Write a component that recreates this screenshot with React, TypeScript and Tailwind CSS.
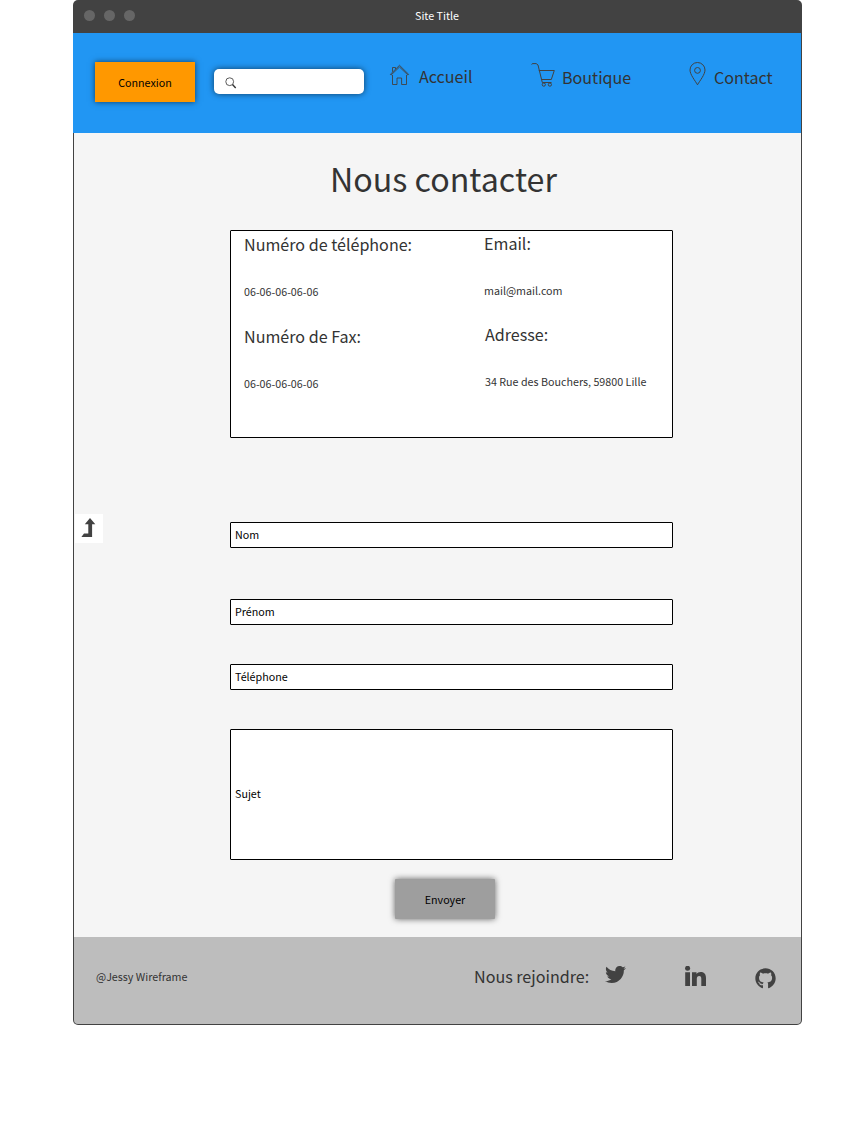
import React from "react";
import { FaTwitter, FaGithub } from "react-icons/fa";

const small = "text-[10.72px] leading-[20px] whitespace-nowrap";
const medium = "text-[16.1px] leading-[24px] whitespace-nowrap text-[#333333]";

function HomeIcon() {
  return (
    <svg className="mt-[31px] h-[22px] w-[21px] shrink-0" viewBox="0 0 21 22" fill="none" stroke="#424242" strokeWidth="0.9">
      <path d="M1.3 10.4 10.5 1.3 19.7 10.4" />
      <path d="M1.3 10.4 2 11.1 10.5 3 19 11.1 19.7 10.4" />
      <path d="M3.5 7.8V3.5h3v1.5" />
      <path d="M3.5 11v9.5h4.5V14h4.6v6.5h4.9V11" />
    </svg>
  );
}

function CartIcon() {
  return (
    <svg className="mt-[29px] h-[26px] w-[25px] shrink-0" viewBox="0 0 25 26" fill="none" stroke="#424242" strokeWidth="1">
      <path d="M0.7 2.6 1.3 1.6H5.2L7 3 11.3 20.5H20.5" />
      <path d="M7.8 8.5H23.3L20.3 17.5H10.5" />
      <circle cx="12.8" cy="22.6" r="1.6" />
      <circle cx="18.9" cy="22.6" r="1.6" />
    </svg>
  );
}

function PinIcon() {
  return (
    <svg className="mt-[28px] h-[25px] w-[17px] shrink-0" viewBox="0 0 17 25" fill="none" stroke="#424242" strokeWidth="1">
      <path d="M8.5 23.8C6 19.5 1 13.5 1 9a7.5 7.5 0 0 1 15 0c0 4.5-5 10.5-7.5 14.8Z" />
      <circle cx="8.5" cy="9.4" r="2.9" />
    </svg>
  );
}

function SearchIcon() {
  return (
    <svg className="h-[12px] w-[12px]" viewBox="0 0 12 12" fill="none" stroke="#333">
      <circle cx="4.7" cy="4.7" r="3.9" strokeWidth="0.8" />
      <path d="M7.5 7.6 10.7 11" strokeWidth="1.4" />
    </svg>
  );
}

function LevelUpIcon() {
  return (
    <svg className="h-[19px] w-[15px]" viewBox="0 0 15 19" fill="#424242">
      <path d="M9 0 14.3 6.2H11.1V19H0.4L3 15.6H7.3V6.2H3.8Z" />
    </svg>
  );
}

function LinkedinIcon() {
  return (
    <svg className="mt-[29px] h-[20px] w-[21px]" viewBox="0 0 21 20" fill="#424242">
      <circle cx="2.6" cy="2.3" r="2.5" />
      <path d="M0.2 6.2H5V20H0.2ZM7 6.2H11.5V8C12.3 6.7 13.7 5.9 15.7 5.9 19.5 5.9 21 8.4 21 12V20H16.3V12.8C16.3 10.9 15.8 9.9 14.2 9.9 12.5 9.9 11.8 11 11.8 12.9V20H7Z" />
    </svg>
  );
}

function Info({ label, value, className }: { label: string; value: string; className: string }) {
  return (
    <div className={className}>
      <h2 className={medium}>{label}</h2>
      <p className={`mt-[26px] text-[#333333] ${small}`}>{value}</p>
    </div>
  );
}

function Field({ label, className }: { label: string; className: string }) {
  return (
    <label className={`flex w-[443px] items-center rounded-[1px] border border-black bg-white pl-1 text-black ${small} ${className}`}>
      {label}
    </label>
  );
}

export default function App() {
  return (
    <div className="h-[1134px] w-[852px] bg-white pl-[73px] font-['Noto_Sans_CJK_SC',sans-serif]">
      <div className="flex h-[1025px] w-[729px] flex-col overflow-hidden rounded-[5px] bg-[#424242]">
        <div className="flex h-[33px] shrink-0 items-start">
          <div className="flex w-[342px] gap-[9px] pt-[9.5px] pl-[11px]">
            <span className="size-[11px] rounded-full bg-[#666666]" />
            <span className="size-[11px] rounded-full bg-[#666666]" />
            <span className="size-[11px] rounded-full bg-[#666666]" />
          </div>
          <span className={`mt-[6px] text-white ${small}`}>Site Title</span>
        </div>

        <header className="mr-px flex h-[100px] shrink-0 items-start bg-[#2196f3]">
          <button className={`mt-[29px] ml-[22px] h-[40px] w-[100px] bg-[#ff9800] pt-[2px] text-black shadow-[0_0_6px_rgba(0,0,0,0.6)] ${small}`}>
            Connexion
          </button>
          <div className="mt-[36px] ml-[19px] flex h-[25px] w-[150px] items-center rounded-[5px] bg-white pt-[2px] pl-[10.5px] shadow-[0_0_6px_rgba(0,0,0,0.6)]">
            <SearchIcon />
          </div>
          <nav className="flex items-start">
            <a className="ml-[25px] flex w-[142px] gap-[9px]">
              <HomeIcon />
              <span className={`mt-[31px] ${medium}`}>Accueil</span>
            </a>
            <a className="flex w-[158px] gap-[6px]">
              <CartIcon />
              <span className={`mt-[32px] ${medium}`}>Boutique</span>
            </a>
            <a className="flex gap-[8px]">
              <PinIcon />
              <span className={`mt-[32px] ${medium}`}>Contact</span>
            </a>
          </nav>
        </header>

        <main className="mx-px flex h-[804px] shrink-0 items-start bg-[#f5f5f5]">
          <a className="mt-[381px] mr-[127px] ml-px flex h-[29px] w-[28px] items-start bg-white pt-[4px] pl-[6px]">
            <LevelUpIcon />
          </a>
          <div className="flex w-[443px] flex-col">
            <h1 className="mt-[20px] ml-[100px] text-[32.2px] leading-[50px] whitespace-nowrap text-[#333333]">Nous contacter</h1>
            <section className="mt-[27px] grid h-[208px] w-[443px] grid-cols-[240px_1fr] grid-rows-[92px_1fr] rounded-[1px] border border-black bg-white pl-[13px]">
              <Info label="Numéro de téléphone:" value="06-06-06-06-06" className="pt-px" />
              <Info label="Email:" value="mail@mail.com" className="" />
              <Info label="Numéro de Fax:" value="06-06-06-06-06" className="pt-px" />
              <Info label="Adresse:" value="34 Rue des Bouchers, 59800 Lille" className="-mt-px pl-px" />
            </section>
            <Field label="Nom" className="mt-[84px] h-[26px]" />
            <Field label="Prénom" className="mt-[51px] h-[26px]" />
            <Field label="Téléphone" className="mt-[39px] h-[26px]" />
            <Field label="Sujet" className="mt-[39px] h-[131px] pb-[2px]" />
            <button className={`mt-[19px] ml-[165px] h-[40px] w-[100px] rounded-[1px] bg-[#9e9e9e] pt-[2px] text-black shadow-[0_0_6px_rgba(0,0,0,0.6)] ${small}`}>
              Envoyer
            </button>
          </div>
        </main>

        <footer className="mx-px mb-px flex h-[87px] shrink-0 items-start rounded-b-[4px] bg-[#bdbdbd] text-[#424242]">
          <span className={`mt-[30px] ml-[22px] w-[378px] text-[#333333] ${small}`}>@Jessy Wireframe</span>
          <span className={`mt-[27px] w-[131px] ${medium}`}>Nous rejoindre:</span>
          <FaTwitter className="mt-[27px] mr-[59px] size-[21px]" />
          <LinkedinIcon />
          <FaGithub className="mt-[31px] ml-[49px] size-[21px]" />
        </footer>
      </div>
    </div>
  );
}
